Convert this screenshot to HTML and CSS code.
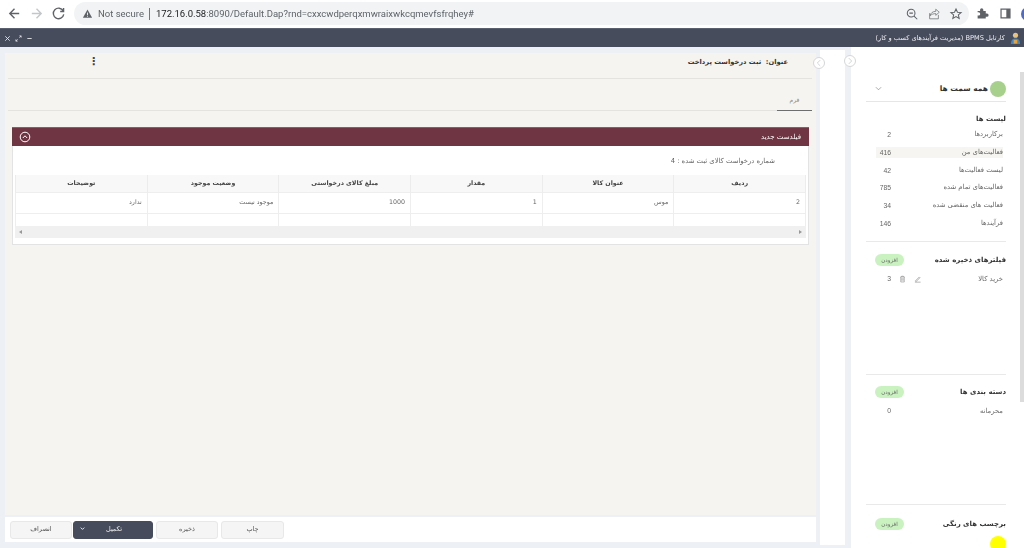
FILE: index.html
```html
<!DOCTYPE html>
<html lang="fa">
<head>
<meta charset="utf-8">
<title>BPMS</title>
<link rel="stylesheet" href="styles.css">
</head>
<body>
<header class="chrome">
  <svg class="nav-icon" viewBox="0 0 16 16"><path d="M13 8H3.500M8 3L3 8l5 5" fill="none" stroke="#5f6368" stroke-width="1.500"/></svg>
  <svg class="nav-icon" viewBox="0 0 16 16"><path d="M3 8h9.500M8 3l5 5-5 5" fill="none" stroke="#c4c7ca" stroke-width="1.500"/></svg>
  <svg class="nav-icon" viewBox="0 0 16 16"><path d="M13 5.200A5.600 5.600 0 1 0 13.600 9M13.400 2.200v3.600H9.800" fill="none" stroke="#5f6368" stroke-width="1.500"/></svg>
  <div class="omnibox">
    <svg class="warn" viewBox="0 0 12 12"><path d="M6 1.500L11 10.500H1z" fill="#5f6368"/><path d="M6 5v3M6 8.800v.8" stroke="#f1f3f4"/></svg>
    <span class="secure">Not secure</span>
    <span class="pipe"></span>
    <span class="url"><b>172.16.0.58</b>:8090/Default.Dap?rnd=cxxcwdperqxmwraixwkcqmevfsfrqhey#</span>
    <span class="omni-actions">
      <svg viewBox="0 0 16 16"><circle cx="7" cy="7" r="4.400" fill="none" stroke="#5f6368" stroke-width="1.200"/><path d="M10.300 10.300L14 14M5 7h4" stroke="#5f6368" stroke-width="1.200"/></svg>
      <svg viewBox="0 0 16 16"><path d="M3 7v6.500h10V9M3.500 10c.5-3 3-5 6.500-5V2.500L14 6l-4 3.500V7.500c-2.500 0-5 1-6.500 2.500z" fill="none" stroke="#7d8185" stroke-width="1"/></svg>
      <svg viewBox="0 0 16 16"><path d="M8 2.200l1.700 3.800 4.100.4-3.100 2.700.9 4-3.600-2.100-3.600 2.100.9-4-3.100-2.700 4.100-.4z" fill="none" stroke="#5f6368" stroke-width="1.200"/></svg>
    </span>
  </div>
  <svg class="ext" viewBox="0 0 16 16"><path d="M2 6h3V4.500a2 2 0 0 1 4 0V6h3v3h1.500a2 2 0 0 1 0 4H12v2H2v-3.500h1.200a2 2 0 0 0 0-4H2z" fill="#5f6368" transform="translate(0 -1)"/></svg>
  <svg class="ext" viewBox="0 0 16 16"><path d="M2.500 2.500h11v11h-11z" fill="none" stroke="#5f6368" stroke-width="1.500"/><path d="M9 2.500h4.500v11H9z" fill="#5f6368"/></svg>
  <span class="avatar"></span>
</header>

<div class="titlebar">
  <div class="win-controls">
    <svg viewBox="0 0 8 8"><path d="M1.500 1.500l5 5M6.500 1.500l-5 5" stroke="#e8e9ec"/></svg>
    <svg viewBox="0 0 8 8"><path d="M1 7l2-2M7 1L5 3M1 5v2h2M5 1h2v2" fill="none" stroke="#e8e9ec" stroke-width=".9"/></svg>
    <svg viewBox="0 0 8 8"><path d="M1.500 4h5" stroke="#e8e9ec"/></svg>
  </div>
  <div class="app-title">
    <svg class="app-logo" viewBox="0 0 12 14"><circle cx="6" cy="3.500" r="2.800" fill="#e9c27d"/><path d="M1 13c0-4.500 2-6 5-6s5 1.500 5 6z" fill="#3f88c5"/><rect x="4" y="8.500" width="4" height="4" fill="#e8a33d"/></svg>
    <span dir="rtl">کارتابل BPMS (مدیریت فرآیندهای کسب و کار)</span>
  </div>
</div>

<div class="workspace">
  <main class="main-panel">
    <div class="form-area">
      <div class="form-head">
        <span class="kebab">⋮</span>
        <span class="form-title" dir="rtl">عنوان:&nbsp; ثبت درخواست پرداخت</span>
      </div>
      <div class="tabs"><span class="tab" dir="rtl">فرم</span></div>
      <section class="card">
        <div class="card-head">
          <svg class="collapse" viewBox="0 0 12 12"><circle cx="6" cy="6" r="4.800" fill="none" stroke="#fff"/><path d="M3.800 7L6 4.800 8.200 7" fill="none" stroke="#fff"/></svg>
          <span dir="rtl">فیلدست جدید</span>
        </div>
        <div class="card-body">
          <p class="req-no" dir="rtl">شماره درخواست کالای ثبت شده : 4</p>
          <table class="grid" dir="rtl">
            <thead>
              <tr><th>ردیف</th><th>عنوان کالا</th><th>مقدار</th><th>مبلغ کالای درخواستی</th><th>وضعیت موجود</th><th>توضیحات</th></tr>
            </thead>
            <tbody>
              <tr class="data"><td>2</td><td>موس</td><td>1</td><td>1000</td><td>موجود نیست</td><td>ندارد</td></tr>
              <tr class="blank"><td></td><td></td><td></td><td></td><td></td><td></td></tr>
            </tbody>
          </table>
          <div class="hscroll"><span class="arrow-l"></span><span class="arrow-r"></span></div>
        </div>
      </section>
    </div>
    <footer class="actions">
      <button class="btn">انصراف</button>
      <button class="btn btn-primary"><svg viewBox="0 0 8 8"><path d="M2 3l2 2 2-2" fill="none" stroke="#fff"/></svg><span>تکمیل</span></button>
      <button class="btn">ذخیره</button>
      <button class="btn">چاپ</button>
    </footer>
    <span class="toggle toggle-left"><svg viewBox="0 0 12 12"><path d="M7.500 2.500L4 6l3.500 3.500" fill="none" stroke="#c9cbcd"/></svg></span>
  </main>

  <div class="strip"></div>

  <aside class="sidebar" dir="rtl">
    <span class="toggle toggle-right"><svg viewBox="0 0 12 12"><path d="M4.500 2.500L8 6 4.500 9.500" fill="none" stroke="#c9cbcd"/></svg></span>
    <span class="side-thumb"></span>
    <div class="role">
      <span class="role-dot"></span>
      <span class="role-name">همه سمت ها</span>
      <svg class="role-chev" viewBox="0 0 8 8"><path d="M1 2.500l3 3 3-3" fill="none" stroke="#777" stroke-width=".7"/></svg>
    </div>
    <section class="block block-lists">
      <h2 class="block-title">لیست ها</h2>
      <ul class="rows">
        <li><span>برکاربردها</span><span class="count">2</span></li>
        <li class="active"><span>فعالیت‌های من</span><span class="count">416</span></li>
        <li><span>لیست فعالیت‌ها</span><span class="count">42</span></li>
        <li><span>فعالیت‌های تمام شده</span><span class="count">785</span></li>
        <li><span>فعالیت های منقضی شده</span><span class="count">34</span></li>
        <li><span>فرآیندها</span><span class="count">146</span></li>
      </ul>
    </section>
    <section class="block block-filters">
      <div class="block-head"><h2 class="block-title">فیلترهای ذخیره شده</h2><span class="pill">افزودن</span></div>
      <div class="row-line">
        <span>خرید کالا</span>
        <span class="row-tools">
          <svg viewBox="0 0 8 8"><path d="M1.500 6.200L6 1.700l.8.8-4.500 4.500zM1 7.600h6.500" fill="none" stroke="#777" stroke-width=".6"/></svg>
          <svg viewBox="0 0 8 8"><path d="M1.500 1.700h5M3 1.700V.8h2v.9M2 1.700v5.700h4V1.700M3.300 3v3M4.700 3v3" fill="none" stroke="#777" stroke-width=".6"/></svg>
          <span class="count">3</span>
        </span>
      </div>
    </section>
    <section class="block block-cats">
      <div class="block-head"><h2 class="block-title">دسته بندی ها</h2><span class="pill">افزودن</span></div>
      <div class="row-line"><span>محرمانه</span><span class="count">0</span></div>
    </section>
    <section class="block block-colors">
      <div class="block-head"><h2 class="block-title">برچسب های رنگی</h2><span class="pill">افزودن</span></div>
      <span class="color-dot"></span>
    </section>
  </aside>
</div>
</body>
</html>
```
FILE: styles.css
```css
* { box-sizing: border-box; }
html, body { margin: 0; height: 548px; overflow: hidden; }
body { background: #edf1f6; font-family: "DejaVu Sans", sans-serif; color: #444; font-size: 7px; }

.chrome, .titlebar, .workspace { filter: blur(.3px); }

.chrome { height: 28px; background: #fff; display: flex; align-items: center; padding: 0 0 1px 7px; overflow: hidden; }
.nav-icon { width: 15px; height: 15px; margin-right: 7px; flex: none; }
.omnibox { flex: none; margin-left: 1px; width: 895px; height: 23px; border-radius: 12px; background: #f1f3f4; display: flex; align-items: center; padding: 0 6px 0 8px; font: 9.500px "Roboto", sans-serif; color: #5f6368; }
.warn { width: 11px; height: 11px; margin-right: 5px; }
.pipe { width: 1px; height: 12px; background: #777; margin: 0 6px 0 5px; }
.url b { font-weight: 400; color: #202124; }
.omni-actions { margin-left: auto; display: flex; gap: 8px; }
.omni-actions svg { width: 14px; height: 14px; }
.ext { width: 13px; height: 13px; margin-left: 7px; flex: none; }
.ext + .ext { margin-left: 10px; }
.avatar { width: 14px; height: 14px; border-radius: 50%; background: #4f6bc8; margin-left: 9px; flex: none; }

.titlebar { height: 19px; background: #474c5c; border-top: 1px solid #5b6070; display: flex; align-items: center; justify-content: space-between; padding: 0 3px 0 4px; color: #eceef2; }
.win-controls { display: flex; gap: 4px; }
.win-controls svg { width: 7px; height: 7px; }
.app-title { display: flex; flex-direction: row-reverse; align-items: center; gap: 5px; font-size: 6.600px; }
.app-logo { width: 11px; height: 13px; }

.workspace { display: flex; height: 501px; position: relative; }
.main-panel { position: relative; width: 811px; margin: 6px 0 0 5px; height: 489px; display: flex; flex-direction: column; }
.form-area { height: 462px; background: #f5f4f0; padding: 0 4px 0 3px; }
.form-head { height: 26px; border-bottom: 1px solid #e4e3df; display: flex; align-items: center; justify-content: space-between; padding: 0 24px 8px 80px; color: #333; }
.kebab { font: 700 11px "DejaVu Sans", sans-serif; color: #444; }
.form-title { font-size: 6.700px; font-weight: 700; }
.tabs { height: 32px; border-bottom: 1px solid #e4e3df; display: flex; justify-content: flex-end; align-items: flex-end; }
.tab { width: 35px; height: 18px; margin-bottom: -1px; border-bottom: 1px solid #6e6e6e; text-align: center; font-size: 6px; color: #888; line-height: 14px; }

.card { margin: 16px 3px 0 4px; height: 118px; background: #fff; border: 1px solid #e3e3e3; border-top: 0; }
.card-head { height: 19px; background: #703543; border-top: 1px solid #8d5c68; color: #fff; font-size: 7px; display: flex; align-items: center; justify-content: space-between; padding: 0 8px 0 7px; margin: 0 -1px; }
.collapse { width: 12px; height: 12px; }
.card-body { padding: 0 2px; }
.req-no { margin: 0; height: 29px; line-height: 30px; padding-right: 31px; font-size: 6.800px; color: #666; }
.grid { width: 100%; table-layout: fixed; border-collapse: collapse; font-size: 6.300px; color: #666; }
.grid th { height: 17px; background: #f8f8f8; border-right: 1px solid #ececec; border-left: 1px solid #ececec; font-weight: 700; color: #444; padding: 0 0 2px; }
.grid td { border: 1px solid #eeeeee; padding: 0 5px 2px; text-align: right; }
.data td { height: 21px; }
.blank td { height: 13px; border-bottom: 0; }
.hscroll { height: 12px; background: #f0f0f0; display: flex; justify-content: space-between; align-items: center; padding: 0 4px; }
.arrow-l { border: 2px solid transparent; border-right: 3px solid #999; border-left: 0; }
.arrow-r { border: 2px solid transparent; border-left: 3px solid #999; border-right: 0; }

.actions { flex: none; margin-top: 2px; height: 25px; background: #fff; display: flex; align-items: center; gap: 3px; padding: 0 0 0 5px; }
.btn { width: 62px; height: 18px; padding: 0 0 2px; background: #f5f5f5; border: 1px solid #e8e8e8; border-radius: 3px; font: 6.500px "DejaVu Sans", sans-serif; color: #555; }
.btn:nth-child(1) { margin-right: -2px; }
.btn:nth-child(4) { width: 63px; }
.btn-primary { width: 80px; background: #474c5c; border-color: #474c5c; color: #eee; display: flex; align-items: center; padding-left: 5px; }
.btn-primary svg { width: 7px; height: 7px; }
.btn-primary span { flex: 1; text-align: center; padding-right: 10px; }

.toggle { position: absolute; width: 12px; height: 12px; border-radius: 50%; background: #fff; border: 1px solid #d5d6d7; display: flex; }
.toggle svg { width: 10px; height: 10px; }
.toggle-left { right: -9px; top: 4px; }
.toggle-right { left: -7px; top: 8px; }

.strip { width: 25px; margin: 3px 0 3px 4px; background: #fff; }

.sidebar { position: relative; width: 173px; margin-left: 6px; background: #fff; padding: 33px 18px 0 15px; }
.side-thumb { position: absolute; left: 169px; top: 25px; width: 4px; height: 330px; background: #dcdcdc; }
.role { height: 22px; display: flex; align-items: flex-start; border-bottom: 1px solid #e6e6e6; }
.role-dot { width: 16px; height: 16px; border-radius: 50%; background: #a8d08d; margin-top: 1px; }
.role-name { margin-right: 2px; font-size: 7.500px; font-weight: 700; color: #333; line-height: 17px; }
.role-chev { width: 7px; height: 7px; margin: 5px auto 0 9px; }

.block-title { margin: 0; font-size: 7px; font-weight: 700; color: #333; line-height: 12px; }
.block { border-bottom: 1px solid #e9e9e9; }
.block-lists { height: 140px; padding-top: 11px; }
.rows { list-style: none; margin: 4px 0 0; padding: 0 3px 0 10px; display: flex; flex-direction: column; gap: 6.800px; }
.rows li { height: 11px; line-height: 11px; display: flex; justify-content: space-between; font-size: 6.800px; color: #666; }
.rows .active { background: #f6f5f1; }
.count { width: 15px; font: 6.800px "Liberation Sans", sans-serif; color: #666; text-align: right; line-height: 11px; flex: none; }
.block-filters { height: 133px; padding-top: 12px; }
.block-cats { height: 130px; padding-top: 11px; }
.block-colors { border-bottom: 0; padding-top: 13px; }
.block-head { display: flex; justify-content: space-between; align-items: center; height: 12px; }
.pill { width: 29px; height: 12px; border-radius: 6px; background: #c9f2c0; font-size: 5.500px; color: #666; text-align: center; line-height: 12px; margin-left: 9px; }
.row-line { display: flex; justify-content: space-between; align-items: center; margin-top: 7px; padding: 0 3px 0 10px; height: 11px; font-size: 6.800px; color: #666; }
.row-tools { display: flex; align-items: center; gap: 8px; }
.row-tools svg { width: 7px; height: 8px; }
.color-dot { display: block; width: 16px; height: 16px; border-radius: 50%; background: #ffff00; margin-top: 6px; }
```
